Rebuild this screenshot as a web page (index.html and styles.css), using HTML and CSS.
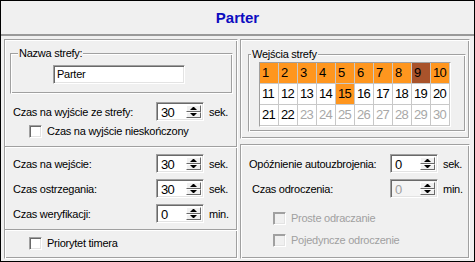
FILE: index.html
```html
<!DOCTYPE html>
<html lang="pl">
<head>
  <meta charset="UTF-8">
  <title>Parter</title>
  <link rel="stylesheet" href="styles.css">
</head>
<body>

  <div class="window">
    <div class="head">Parter</div>

    <div class="body">
      <!-- Left panel: name and times -->
      <div class="panel left">
        <fieldset class="group name-group">
          <legend>Nazwa strefy:</legend>
          <div class="edit">Parter</div>
        </fieldset>

        <div class="row exit-row">
          <span class="lbl">Czas na wyjście ze strefy:</span>
          <span class="spin"><span class="val">30</span><span class="btns"><i class="up"></i><i class="down"></i></span></span>
          <span class="unit">sek.</span>
        </div>
        <div class="check exit-check"><span class="box"></span>Czas na wyjście nieskończony</div>

        <div class="sep"></div>

        <div class="row first">
          <span class="lbl">Czas na wejście:</span>
          <span class="spin"><span class="val">30</span><span class="btns"><i class="up"></i><i class="down"></i></span></span>
          <span class="unit">sek.</span>
        </div>
        <div class="row">
          <span class="lbl">Czas ostrzegania:</span>
          <span class="spin"><span class="val">30</span><span class="btns"><i class="up"></i><i class="down"></i></span></span>
          <span class="unit">sek.</span>
        </div>
        <div class="row">
          <span class="lbl">Czas weryfikacji:</span>
          <span class="spin"><span class="val">0</span><span class="btns"><i class="up"></i><i class="down"></i></span></span>
          <span class="unit">min.</span>
        </div>

        <div class="sep"></div>

        <div class="check timer-check"><span class="box"></span>Priorytet timera</div>
      </div>

      <div class="col">
        <!-- Zone inputs -->
        <div class="panel zones">
          <fieldset class="group zone-group">
            <legend>Wejścia strefy</legend>
            <div class="grid">
              <div class="on">1</div><div class="on">2</div><div class="on">3</div><div class="on">4</div><div class="on">5</div>
              <div class="on">6</div><div class="on">7</div><div class="on">8</div><div class="hot">9</div><div class="on">10</div>
              <div>11</div><div>12</div><div>13</div><div>14</div><div class="on">15</div>
              <div>16</div><div>17</div><div>18</div><div>19</div><div>20</div>
              <div>21</div><div>22</div><div class="off">23</div><div class="off">24</div><div class="off">25</div>
              <div class="off">26</div><div class="off">27</div><div class="off">28</div><div class="off">29</div><div class="off">30</div>
            </div>
          </fieldset>
        </div>

        <!-- Auto arming delay -->
        <div class="panel delay">
          <div class="row arm-row">
            <span class="lbl">Opóźnienie autouzbrojenia:</span>
            <span class="spin"><span class="val">0</span><span class="btns"><i class="up"></i><i class="down"></i></span></span>
            <span class="unit">sek.</span>
          </div>
          <div class="row defer-row">
            <span class="lbl">Czas odroczenia:</span>
            <span class="spin disabled"><span class="val">0</span><span class="btns"><i class="up"></i><i class="down"></i></span></span>
            <span class="unit">min.</span>
          </div>
          <div class="check disabled simple-check"><span class="box"></span>Proste odraczanie</div>
          <div class="check disabled single-check"><span class="box"></span>Pojedyncze odroczenie</div>
        </div>
      </div>
    </div>
  </div>

</body>
</html>
```

FILE: styles.css
```css
body {
  margin: 0;
  font-family: 'Liberation Sans', Arial, sans-serif;
  font-size: 11px;
  letter-spacing: -0.25px;
  color: #000;
}

.window {
  width: 475px;
  height: 262px;
  box-sizing: border-box;
  border: 1px solid #000;
  background: #f0f0f0;
  display: flex;
  flex-direction: column;
}

.head {
  flex: none;
  height: 33px;
  display: flex;
  align-items: center;
  justify-content: center;
  font: bold 15px 'Liberation Sans', Arial, sans-serif;
  letter-spacing: 0;
  color: #0c0cc0;
  border-bottom: 2px solid #999;
}

.body {
  display: flex;
  gap: 2px;
  padding: 3px 0 0 3px;
}

/* etched frame: grey line with white line beside it */
.panel,
.group {
  box-sizing: border-box;
  border: 1px solid;
  border-color: #a0a0a0 #fff #fff #a0a0a0;
  box-shadow: inset 1px 1px #fff, inset -1px -1px #a0a0a0;
}

.left {
  width: 234px;
  height: 220px;
  display: flex;
  flex-direction: column;
  align-items: flex-start;
}

.col {
  width: 230px;
  display: flex;
  flex-direction: column;
  gap: 5px;
}

.zones {
  height: 100px;
}

.delay {
  height: 115px;
  display: flex;
  flex-direction: column;
  align-items: flex-start;
}

.group {
  margin: 0;
  padding: 0;
  min-width: 0;
}

.group legend {
  padding: 0 1px;
  line-height: 13px;
  background: #f0f0f0;
}

.name-group {
  width: 223px;
  margin: 7px 0 0 5px;
  padding: 5px 0 9px 0;
}

.name-group legend {
  margin-left: 7px;
}

.zone-group {
  width: 218px;
  margin: 8px 0 0 7px;
  padding: 1px 0 4px 0;
}

.zone-group legend {
  margin-left: 2px;
}

/* sunken controls */
.edit,
.spin,
.box,
.grid {
  box-sizing: border-box;
  border: 1px solid;
  border-color: #a0a0a0 #fff #fff #a0a0a0;
}

.edit,
.spin,
.box {
  box-shadow: inset 1px 1px #696969, inset -1px -1px #e3e3e3;
  background: #fff;
}

.edit {
  width: 132px;
  height: 19px;
  margin-left: 42px;
  padding-left: 3px;
  line-height: 17px;
}

.row {
  display: flex;
  align-items: center;
  height: 19px;
  padding-left: 8px;
  white-space: nowrap;
}

.lbl {
  width: 143px;
}

.exit-row {
  margin-top: 8px;
}

.first {
  margin-top: 6px;
}

.row + .row {
  margin-top: 6px;
}

.spin {
  display: flex;
  width: 48px;
  height: 19px;
  padding: 2px;
}

.spin .val {
  flex: 1;
  padding-left: 2px;
  line-height: 15px;
  font-size: 13px;
  letter-spacing: -0.7px;
}

.spin .btns {
  width: 15px;
  display: flex;
  flex-direction: column;
}

.spin i {
  flex: 1;
  display: flex;
  align-items: center;
  justify-content: center;
  background: #f0f0f0;
  border: 1px solid;
  border-color: #fff #696969 #696969 #fff;
}

.spin i::after {
  content: "";
  width: 1px;
  border-left: 3px solid transparent;
  border-right: 3px solid transparent;
}

.spin .up::after {
  border-bottom: 3px solid #000;
}

.spin .down::after {
  border-top: 3px solid #000;
}

.spin.disabled {
  background: #f4f4f4;
}

.spin.disabled .val {
  color: #a0a0a0;
}

.unit {
  margin-left: 5px;
}

.check {
  display: flex;
  align-items: center;
  gap: 5px;
  height: 13px;
  line-height: 13px;
  white-space: nowrap;
}

.box {
  width: 13px;
  height: 13px;
}

.exit-check {
  margin-top: 4px;
  padding-left: 24px;
}

.timer-check {
  margin-top: 6px;
  padding-left: 24px;
}

.check.disabled {
  color: #a0a0a0;
}

.check.disabled .box {
  background: #f0f0f0;
  box-shadow: inset 1px 1px #a0a0a0, inset -1px -1px #e3e3e3;
}

.sep {
  align-self: stretch;
  margin-top: 8px;
  border-top: 1px solid #a0a0a0;
  border-bottom: 1px solid #fff;
}

.sep + .row {
  margin-top: 6px;
}

.left .row + .sep {
  margin-top: 6px;
}

/* zone grid */
.grid {
  display: grid;
  grid-template-columns: repeat(10, 18px);
  grid-auto-rows: 20px;
  gap: 1px;
  width: 192px;
  margin-left: 10px;
  padding: 0 1px 1px 0;
  background: #c8c8c8;
}

.grid div {
  background: #fff;
  padding-left: 2px;
  line-height: 20px;
  font-size: 13px;
  letter-spacing: -0.7px;
}

.grid .on {
  background: #ff961e;
}

.grid .hot {
  background: #a9532b;
}

.grid .off {
  color: #a8a8a8;
}

.arm-row {
  margin-top: 9px;
}

.arm-row .lbl {
  width: 141px;
}

.defer-row {
  margin-top: 7px;
}

.defer-row .lbl {
  width: 138px;
  padding-left: 3px;
}

.simple-check {
  margin-top: 14px;
  padding-left: 32px;
}

.single-check {
  margin-top: 9px;
  padding-left: 32px;
}
```
